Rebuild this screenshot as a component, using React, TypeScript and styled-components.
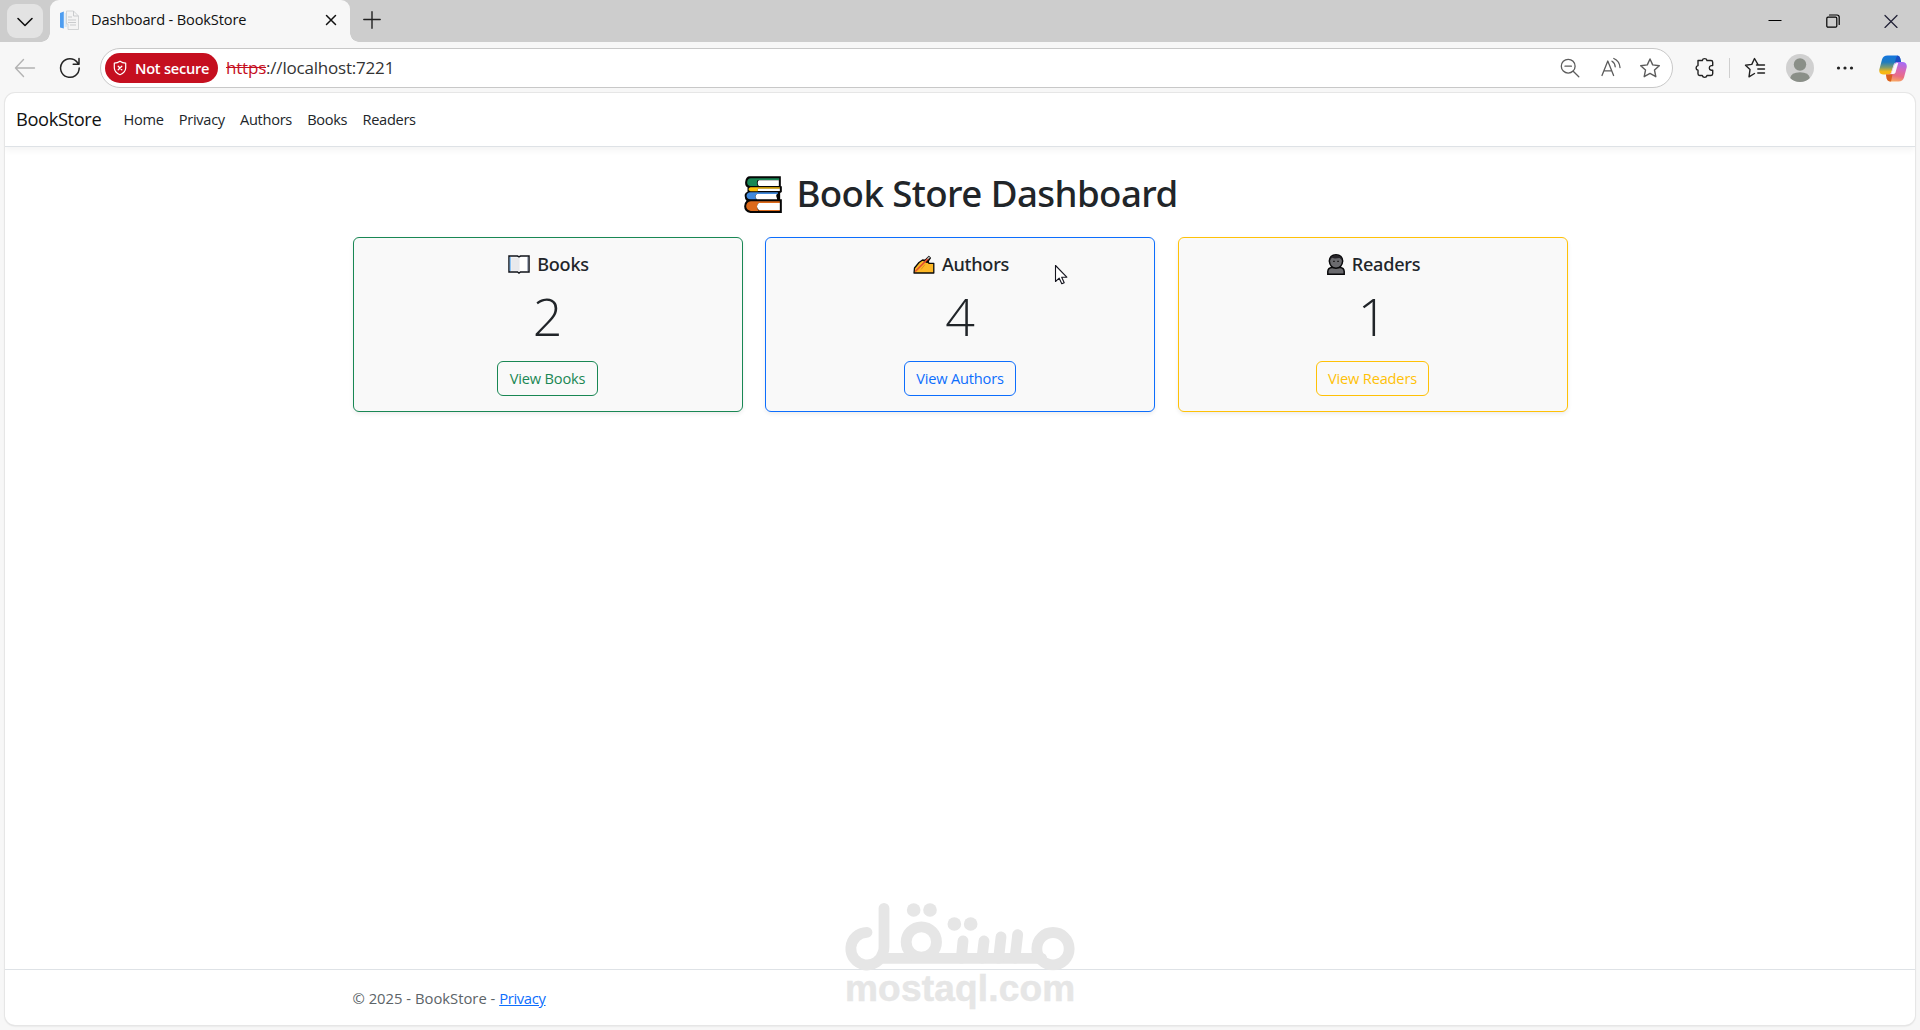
import React from 'react';
import styled, { createGlobalStyle } from 'styled-components';

const GlobalStyle = createGlobalStyle`
  *, *::before, *::after { box-sizing: border-box; }
  body {
    margin: 0;
    background: #f7f7f7;
    color: #212529;
    font-family: 'Open Sans', 'Noto Sans', sans-serif;
    font-size: 14.6px;
    overflow: hidden;
  }
  svg { display: block; flex: none; }
`;

/* ---------- browser window ---------- */

const Window = styled.div`
  position: relative;
  display: flex;
  flex-direction: column;
  width: 100%;
  height: 100vh;
  background: #f7f7f7;
`;

const TabStrip = styled.div`
  display: flex;
  flex: none;
  height: 42px;
  background: #cdcdcd;
`;

const TabSearch = styled.button`
  display: grid;
  place-items: center;
  width: 36px;
  height: 34px;
  margin: 4px 7px 0;
  padding: 1px 0 0;
  border: 0;
  border-radius: 9px;
  background: #e3e3e3;
`;

const Tab = styled.div`
  position: relative;
  display: flex;
  align-items: center;
  width: 300px;
  height: 43px;
  padding: 0 13px 3px 9px;
  border-radius: 9px 9px 0 0;
  background: #f7f7f7;
  color: #111;

  &::before,
  &::after {
    content: '';
    position: absolute;
    bottom: 1px;
    width: 9px;
    height: 9px;
  }
  &::before {
    left: -9px;
    background: radial-gradient(circle at 0 0, transparent 8.5px, #f7f7f7 9px);
  }
  &::after {
    right: -9px;
    background: radial-gradient(circle at 100% 0, transparent 8.5px, #f7f7f7 9px);
  }
`;

const TabTitle = styled.span`
  flex: 1;
  margin: 0 0 2px 11px;
  font-size: 14.6px;
  line-height: 20px;
  letter-spacing: -0.15px;
  white-space: nowrap;
`;

const NewTab = styled.div`
  padding: 11px 0 0 13px;
`;

const WindowControls = styled.div`
  display: flex;
  gap: 44px;
  margin-left: auto;
  padding: 14px 22px 0 0;
`;

const Toolbar = styled.div`
  display: flex;
  flex: none;
  align-items: center;
  height: 50px;
  padding: 2px 13px 0 14px;
`;

const NavIcons = styled.div`
  display: flex;
  align-items: center;
  gap: 23px;
  margin-right: 19px;
`;

const AddressBar = styled.div`
  display: flex;
  flex: 1;
  align-items: center;
  height: 40px;
  padding: 0 10px 0 4px;
  border: 1px solid #c8c8c8;
  border-radius: 20px;
  background: #fff;
`;

const SecurityBadge = styled.div`
  display: flex;
  align-items: center;
  gap: 8px;
  width: 113px;
  height: 30px;
  padding-left: 8px;
  border-radius: 15px;
  background: #c50f1f;
  color: #fff;
  font-size: 14.6px;
  font-weight: 600;
  line-height: 28px;
  letter-spacing: -0.25px;
  white-space: nowrap;
`;

const Url = styled.div`
  flex: 1;
  margin: 0 0 1px 8px;
  font-size: 17px;
  line-height: 24px;
  letter-spacing: -0.2px;
  color: #333;
`;

const InsecureScheme = styled.span`
  color: #c50f1f;
  text-decoration: line-through;
`;

const AddressActions = styled.div`
  display: flex;
  align-items: center;
  gap: 16px;
`;

const Slot = styled.div<{ $before: number; $width: number }>`
  display: grid;
  place-items: center;
  width: ${(p) => p.$width}px;
  margin-left: ${(p) => p.$before}px;
`;

const Divider = styled.div`
  width: 1px;
  height: 20px;
  margin-left: 10px;
  background: #cfcfcf;
`;

/* ---------- web page ---------- */

const Page = styled.div`
  display: flex;
  flex: 1;
  flex-direction: column;
  margin: 1px 5px 5px;
  border-radius: 10px;
  background: #fff;
  box-shadow: 0 0 0 1px #e6e6e6, 0 1px 2px rgba(0, 0, 0, 0.16);
  overflow: hidden;
`;

const SiteHeader = styled.header`
  display: flex;
  flex: none;
  align-items: center;
  height: 54px;
  padding: 0 11px 2px;
  border-bottom: 1px solid #dee2e6;
  box-shadow: 0 3px 7px rgba(0, 0, 0, 0.05);
`;

const Brand = styled.a`
  width: 85px;
  margin-right: 15px;
  color: #111;
  font-size: 18.3px;
  line-height: 28px;
  letter-spacing: -0.38px;
`;

const SiteNav = styled.nav`
  display: flex;
`;

const NavLink = styled.a`
  padding: 0 7.6px;
  color: #212529;
  letter-spacing: -0.3px;
`;

const Container = styled.main`
  flex: 1;
  width: 1215px;
  margin: 0 auto;
  padding-top: 24px;
`;

const Title = styled.h1`
  display: flex;
  align-items: center;
  justify-content: center;
  gap: 13px;
  height: 45px;
  margin: 0 0 21px;
  padding-left: 2px;
  font-family: 'Noto Sans', 'Open Sans', sans-serif;
  font-size: 36.7px;
  font-weight: 500;
  line-height: 45px;
  letter-spacing: -0.6px;
`;

const CardGrid = styled.section`
  display: grid;
  grid-template-columns: repeat(3, 1fr);
  gap: 22.5px;
`;

const Card = styled.article<{ $accent: string }>`
  display: flex;
  flex-direction: column;
  align-items: center;
  height: 175px;
  padding: 15px;
  border: 1px solid ${(p) => p.$accent};
  border-radius: 6px;
  background: #f9f9f9;
  box-shadow: 0 2px 4px rgba(0, 0, 0, 0.075);
`;

const CardTitle = styled.h5`
  display: flex;
  align-items: center;
  gap: 7px;
  height: 22.5px;
  margin: 0 0 7.5px;
  padding-left: 2px;
  font-family: 'Noto Sans', 'Open Sans', sans-serif;
  font-size: 18.1px;
  font-weight: 500;
  letter-spacing: -0.26px;
`;

const Count = styled.p`
  height: 63px;
  margin: 0 0 15px;
  padding-top: 3px;
  font-size: 52px;
  font-weight: 300;
  line-height: 60px;
`;

const ViewButton = styled.a<{ $accent: string }>`
  height: 35px;
  padding: 0 11.5px;
  border: 1px solid ${(p) => p.$accent};
  border-radius: 6px;
  color: ${(p) => p.$accent};
  line-height: 33px;
  letter-spacing: -0.18px;
`;

const SiteFooter = styled.footer`
  flex: none;
  height: 56px;
  border-top: 1px solid #dee2e6;
`;

const FooterInner = styled.div`
  width: 1215px;
  margin: 0 auto;
  color: #5c6468;
  font-size: 14.8px;
  line-height: 57px;
`;

const FooterLink = styled.a`
  color: #0d6efd;
  letter-spacing: -0.35px;
  text-decoration: underline;
`;

/* ---------- overlays ---------- */

const Pointer = styled.svg`
  position: absolute;
  left: 1054px;
  top: 264px;
`;

const Watermark = styled.div`
  position: absolute;
  left: 844px;
  top: 902px;
  width: 232px;
  color: #e6e6e6;
`;

const WatermarkText = styled.div`
  margin: -4px 0 0 1px;
  font-family: 'Liberation Sans', Arial, sans-serif;
  font-size: 37px;
  font-weight: 700;
  line-height: 42px;
  letter-spacing: 0.2px;
  white-space: nowrap;
  -webkit-text-stroke: 0.5px #e6e6e6;
`;

/* ---------- drawings ---------- */

const line = { fill: 'none', stroke: 'currentColor', strokeLinecap: 'round', strokeLinejoin: 'round' } as const;

const BooksStack = () => (
  <svg width="39" height="38" viewBox="48 46 114 114">
    <path d="M64 50H157V80H160V97L155 100V119H160V160H66Q47 157 47 140Q47 129 54 123Q47 116 49 104Q51 98 57 96V83Q49 80 50 67Q52 50 64 50Z" fill="#050505" />
    <path d="M67 56H152V61H88Q82 69 88 79H67Q55 78 56 67Q57 57 67 56Z" fill="#198754" />
    <path d="M91 62H151V79H91Q84 70 91 62Z" fill="#fff" />
    <path d="M66 83H154V87H88V95H66Q60 93 60 89Q60 84 66 83Z" fill="#ffc107" />
    <path d="M88 87H154V94H88Z" fill="#fff" />
    <path d="M66 98H148V103H84Q77 111 84 119H66Q54 117 54 108Q55 99 66 98Z" fill="#4189dc" />
    <path d="M85 103H145L143 108L146 119H85Q77 111 85 103Z" fill="#fff" />
    <path d="M67 125H154V130H91Q80 141 91 154H67Q53 151 53 139Q54 127 67 125Z" fill="#dc6a1c" />
    <path d="M91 130H154V151H91Q80 140 91 130Z" fill="#fff" />
    <path d="M92 152.500H154" stroke="#dc6a1c" strokeWidth="3" />
  </svg>
);

const OpenBook = () => (
  <svg width="22" height="19" viewBox="0 0 22 19">
    <path d="M1 1H9.500L11 1.800L12.500 1H21V17H12.500L11 18L9.500 17H1Z" fill="#fff" stroke="#10131a" strokeWidth="1.500" />
    <path d="M3.200 2.500H9.500L10.600 3.300V15.800H3.200Z" fill="#e8e9ec" />
    <path d="M2.200 2V16" stroke="#5aa9ee" strokeWidth="1" />
    <path d="M19.900 2V16" stroke="#5b6780" strokeWidth=".8" />
    <path d="M11 2.500V16.500" stroke="#d0d2d6" strokeWidth=".6" />
  </svg>
);

const WritingHand = () => (
  <svg width="22" height="19" viewBox="0 0 22 19">
    <path d="M1 18L1.500 13L6 7.500L9.500 5L13 5.300L15 5L15.800 8.300H20.800V18Z" fill="#fdb827" stroke="#0a0a0a" strokeWidth="1.300" strokeLinejoin="round" />
    <path d="M11.500 6L15.800 1.700L17.200 3L14.200 7.200Z" fill="#0a0a0a" stroke="#0a0a0a" strokeWidth="1.600" strokeLinejoin="round" />
    <path d="M2.800 16L14.800 3.800" stroke="#e2512f" strokeWidth="1.700" strokeLinecap="round" />
    <path d="M15 3.500L16.100 2.400" stroke="#b9b9b9" strokeWidth="1.500" strokeLinecap="round" />
    <path d="M8 14.500L12 9.500" stroke="#d98a1a" strokeWidth=".9" />
  </svg>
);

const ReaderBust = () => (
  <svg width="18" height="21" viewBox="0 0 18 21">
    <path d="M.8 20.200V17.500Q1 13.800 5 13.500H13Q17 13.800 17.200 17.500V20.200Z" fill="#6a6a6e" stroke="#08080a" strokeWidth="1.500" />
    <path d="M9 .8Q15 .9 15.700 7Q15 13.800 9 14.200Q3 13.800 2.300 7Q3 .9 9 .8Z" fill="#6a6a6e" stroke="#08080a" strokeWidth="1.500" />
    <path d="M3 6Q3 1.500 9 1.200Q14.500 1.200 15.200 6L12.500 4L8 4.500L5 3.800Z" fill="#252328" />
    <path d="M6.200 7.300h1.500M10.300 7.300h1.500" stroke="#111" strokeWidth="1.300" />
  </svg>
);

const Favicon = () => (
  <svg width="21" height="21" viewBox="0 0 21 21">
    <path d="M1 3L4.800 1.500V18.500L1 17.500Z" fill="#4e9df0" />
    <path d="M5.500 3H8V17H5.500Z" fill="#d9e9f7" />
    <path d="M7.500 1H14.500L19.500 6V19.500H9V14H7.500Z" fill="#f4f4f4" stroke="#c9cbcd" strokeWidth=".8" />
    <path d="M14.500 1V6H19.500M9 7h4M9 10h8M9 12.500h8M11 15h6" fill="none" stroke="#c9cbcd" />
  </svg>
);

const Shield = () => (
  <svg width="14" height="16" viewBox="0 0 14 16" {...line}>
    <path d="M7 1.200Q9.500 3 12.700 3.200V8Q12.500 12.500 7 14.700Q1.500 12.500 1.300 8V3.200Q4.500 3 7 1.200Z" strokeWidth="1.200" />
    <path d="M5.200 6.200L8.800 9.800M8.800 6.200L5.200 9.800" strokeWidth="1.300" />
  </svg>
);

const STAR = 'M10.500 1.500L13.200 7.400L19.800 8.200L15 12.600L16.300 19.200L10.500 15.900L4.700 19.200L6 12.600L1.200 8.200L7.800 7.400Z';

const Copilot = () => (
  <svg width="28" height="27" viewBox="0 0 28 27">
    <defs>
      <linearGradient id="copilotLeft" x1="0" y1="0" x2="0" y2="1">
        <stop offset="0" stopColor="#1376e0" />
        <stop offset=".35" stopColor="#1f7cc0" />
        <stop offset=".62" stopColor="#7b9a70" />
        <stop offset=".85" stopColor="#f7b814" />
      </linearGradient>
      <linearGradient id="copilotRight" x1=".6" y1="0" x2=".4" y2="1">
        <stop offset="0" stopColor="#a66cf5" />
        <stop offset=".4" stopColor="#d968b4" />
        <stop offset=".7" stopColor="#ea6d84" />
        <stop offset="1" stopColor="#f9a960" />
      </linearGradient>
    </defs>
    <path d="M3 4.500Q4.200 .5 8.500 .5H18Q20.500 .5 21.300 3.500L22 7H18Q15.500 7 14.700 9.500L12 18Q11 19.500 9 19.500H4Q0 19 .2 15Z" fill="url(#copilotLeft)" />
    <path d="M18.500 .5Q20.500 .7 21.300 3.500L22 7H18Q16.700 7.200 15.800 8L17 3Z" fill="#1c4ec4" />
    <path d="M25 22.500Q23.800 26.500 19.500 26.500H11Q8.500 26.500 7.700 23.500L7 19.500H9.500Q12 19.500 12.800 17L15.500 9Q16.500 7 19 7H24Q28 7.500 27.800 12Z" fill="url(#copilotRight)" />
    <path d="M7 19.500H13.500L12 26.400Q8.500 26.500 7.700 23.500Z" fill="#d9601d" />
    <path d="M15.500 9.500Q16.200 8 18 8H19.200L16.500 17.500Q15.800 19 14 19H12Z" fill="#fafafa" />
  </svg>
);

const WatermarkLogo = () => (
  <svg width="232" height="70" viewBox="72 36 696 210" fill="none" stroke="currentColor" strokeWidth="32.500" strokeLinecap="round">
    <path d="M141 127A49 49 0 1 0 189 188Q192 182 192 172V55" />
    <path d="M185 205H665" />
    <circle cx="304" cy="156" r="45.500" />
    <circle cx="699" cy="176" r="48.500" />
    <path d="M429 153L424 204M492 153L486 204M543 141L536 204M593 134L585 204" />
    <g fill="currentColor" stroke="none">
      <circle cx="281" cy="60" r="20.500" />
      <circle cx="330" cy="60" r="20.500" />
      <circle cx="403" cy="102" r="20.500" />
      <circle cx="452" cy="102" r="20.500" />
    </g>
  </svg>
);

const cards = [
  { name: 'Books', count: 2, accent: '#198754', icon: <OpenBook /> },
  { name: 'Authors', count: 4, accent: '#0d6efd', icon: <WritingHand /> },
  { name: 'Readers', count: 1, accent: '#ffc107', icon: <ReaderBust /> },
];

export default function App() {
  return (
    <Window>
      <GlobalStyle />
      <TabStrip>
        <TabSearch>
          <svg width="18" height="12" viewBox="0 0 18 12" {...line} color="#111">
            <path d="M2 2.500L9 9.500L16 2.500" strokeWidth="1.600" />
          </svg>
        </TabSearch>
        <Tab>
          <Favicon />
          <TabTitle>Dashboard - BookStore</TabTitle>
          <svg width="12" height="12" viewBox="0 0 12 12" {...line} color="#111">
            <path d="M1.500 1.500L10.500 10.500M10.500 1.500L1.500 10.500" strokeWidth="1.500" />
          </svg>
        </Tab>
        <NewTab>
          <svg width="18" height="18" viewBox="0 0 18 18" {...line} color="#222">
            <path d="M9 .8V17.200M.8 8.500H17.200" strokeWidth="1.400" />
          </svg>
        </NewTab>
        <WindowControls>
          <svg width="14" height="14" viewBox="0 0 14 14">
            <path d="M.5 6.500H13.500" stroke="#000" />
          </svg>
          <svg width="14" height="14" viewBox="0 0 14 14" {...line} color="#000">
            <rect x=".8" y="3.200" width="10" height="10" rx="1.200" strokeWidth="1.200" />
            <path d="M3.500 1H11Q13.200 1 13.200 3.200V10.500" strokeWidth="1.200" />
          </svg>
          <svg width="14" height="14" viewBox="0 0 14 14" {...line} color="#1f1f35">
            <path d="M1 1.500L13 13.500M13 1.500L1 13.500" strokeWidth="1.200" />
          </svg>
        </WindowControls>
      </TabStrip>

      <Toolbar>
        <NavIcons>
          <svg width="22" height="20" viewBox="0 0 22 20" {...line} color="#b3b3b3">
            <path d="M9.500 1.500L1.500 10L9.500 18.500M1.500 10H20.500" strokeWidth="1.400" />
          </svg>
          <svg width="22" height="22" viewBox="0 0 22 22" {...line} color="#252525">
            <path d="M20.200 11A9.300 9.300 0 1 1 18.400 5.500L19.800 7.300M20 1.500V7.300H14.200" strokeWidth="1.500" />
          </svg>
        </NavIcons>
        <AddressBar>
          <SecurityBadge>
            <Shield />
            Not secure
          </SecurityBadge>
          <Url>
            <InsecureScheme>https</InsecureScheme>://localhost:7221
          </Url>
          <AddressActions>
            <svg width="24" height="24" viewBox="0 0 24 24" {...line} color="#5c5c5c">
              <circle cx="10.200" cy="10.200" r="6.900" strokeWidth="1.300" />
              <path d="M7 10.200H13.400M15.200 15.200L20.800 20.800" strokeWidth="1.300" />
            </svg>
            <svg width="24" height="24" viewBox="-1 0 24 24" {...line} color="#5c5c5c">
              <path d="M3 19.500L8.800 5L14.600 19.500M5 14.800H12.600" strokeWidth="1.300" />
              <path d="M13 5.200Q16 7 16.200 10.800M14.800 2.500Q20.500 5 21 11.500" strokeWidth="1.300" />
            </svg>
            <svg width="24" height="24" viewBox="-1.500 -1.500 24 24" {...line} color="#5c5c5c">
              <path d={STAR} strokeWidth="1.400" />
            </svg>
          </AddressActions>
        </AddressBar>
        <Slot $before={16} $width={30}>
          <svg width="22" height="22" viewBox="0 0 22 22" {...line} color="#222">
            <path d="M5 3.500H9.300A2.400 2.400 0 0 1 14 3.500H18Q19.700 3.500 19.700 5.200V8.600H18.200A2.400 2.400 0 0 0 18.200 13.300H19.700V16.800Q19.700 18.500 18 18.500H14A2.400 2.400 0 0 1 9.300 18.500H6.700Q5 18.500 5 16.800V13.300A2.400 2.400 0 0 1 5 8.600V3.500Z" strokeWidth="1.400" />
          </svg>
        </Slot>
        <Divider />
        <Slot $before={10} $width={30}>
          <svg width="22" height="22" viewBox="0 0 22 22" {...line} color="#222">
            <path d="M14 7.600L10.500 1.500L7.800 7.400L1.500 8.200L6 12.600L5 19.800L10.500 16.500M12.500 8H20.500M13.800 12H20.500M13.800 16H20.500" strokeWidth="1.400" />
          </svg>
        </Slot>
        <Slot $before={16} $width={28}>
          <svg width="28" height="28" viewBox="0 0 28 28">
            <clipPath id="avatarClip"><circle cx="14" cy="14" r="14" /></clipPath>
            <g clipPath="url(#avatarClip)">
              <rect width="28" height="28" fill="#d0d0d0" />
              <circle cx="14" cy="10.500" r="6.200" fill="#8a8f88" />
              <path d="M4 28V24.500Q5 18.300 14 18.300T24 24.500V28Z" fill="#8a8f88" />
            </g>
          </svg>
        </Slot>
        <Slot $before={16} $width={30}>
          <svg width="18" height="4" viewBox="0 0 18 4" fill="#222">
            <circle cx="2.500" cy="2" r="1.600" />
            <circle cx="9" cy="2" r="1.600" />
            <circle cx="15.500" cy="2" r="1.600" />
          </svg>
        </Slot>
        <Slot $before={19} $width={28}>
          <Copilot />
        </Slot>
      </Toolbar>

      <Page>
        <SiteHeader>
          <Brand>BookStore</Brand>
          <SiteNav>
            {['Home', 'Privacy', 'Authors', 'Books', 'Readers'].map((item) => (
              <NavLink key={item}>{item}</NavLink>
            ))}
          </SiteNav>
        </SiteHeader>
        <Container>
          <Title>
            <BooksStack />
            Book Store Dashboard
          </Title>
          <CardGrid>
            {cards.map((card) => (
              <Card key={card.name} $accent={card.accent}>
                <CardTitle>
                  {card.icon}
                  {card.name}
                </CardTitle>
                <Count>{card.count}</Count>
                <ViewButton $accent={card.accent}>View {card.name}</ViewButton>
              </Card>
            ))}
          </CardGrid>
        </Container>
        <SiteFooter>
          <FooterInner>
            © 2025 - BookStore - <FooterLink>Privacy</FooterLink>
          </FooterInner>
        </SiteFooter>
      </Page>

      <Watermark>
        <WatermarkLogo />
        <WatermarkText>mostaql.com</WatermarkText>
      </Watermark>
      <Pointer width="14" height="21" viewBox="0 0 14 21">
        <path d="M1.500 1.500V17.500L5.200 14.200L7.800 19.800L10.200 18.700L7.700 13.200H12.800Z" fill="#fff" stroke="#15151f" strokeWidth="1.100" strokeLinejoin="round" />
      </Pointer>
    </Window>
  );
}
